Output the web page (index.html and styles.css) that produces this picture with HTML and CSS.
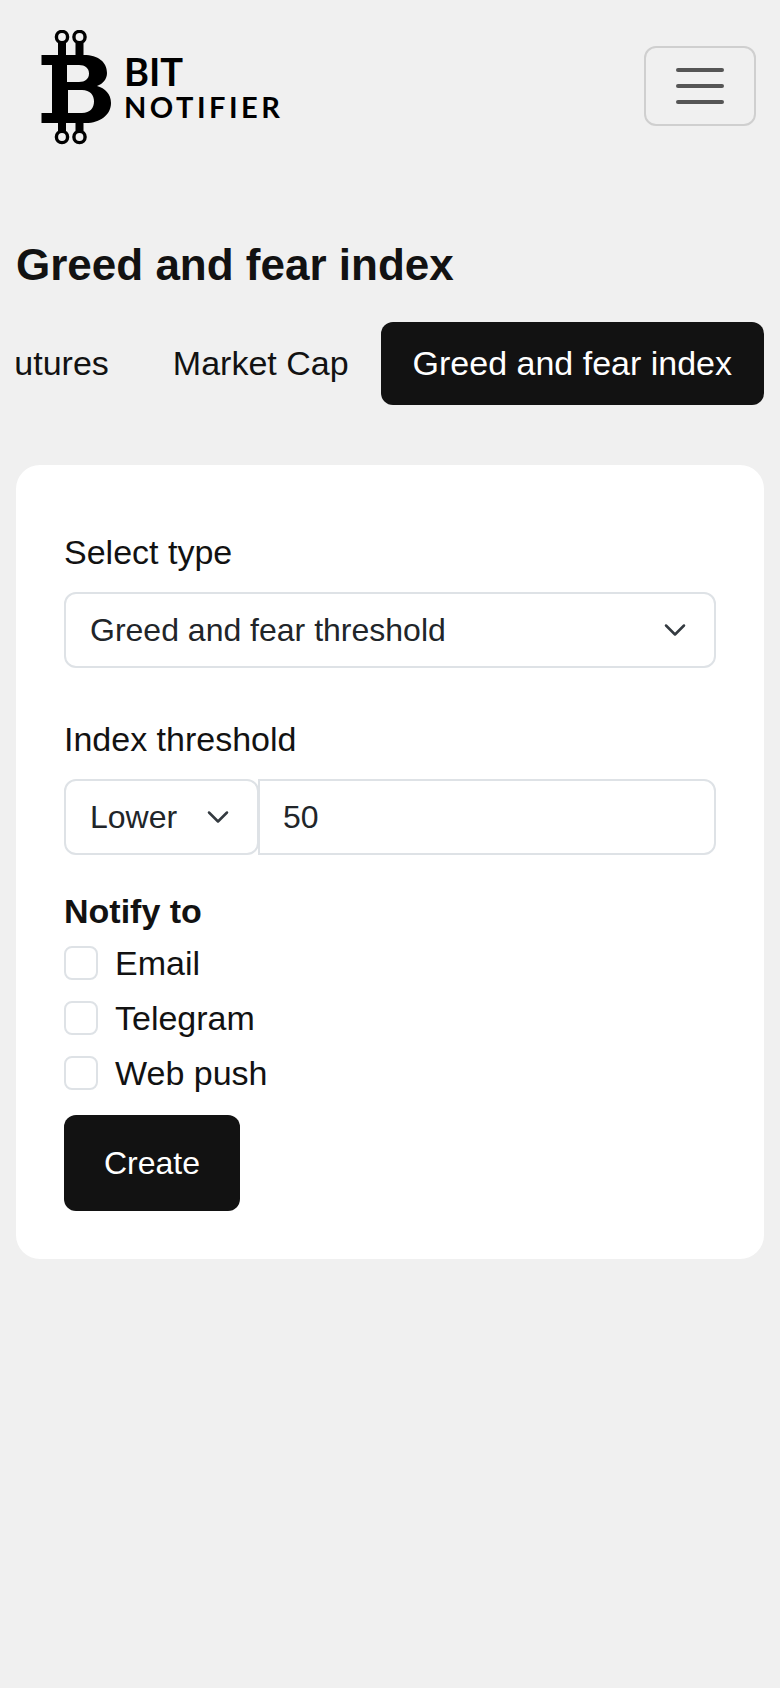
FILE: index.html
```html
<!doctype html>
<html lang="en">
	<head>
		<meta charset="utf-8">
		<meta name="viewport" content="width=device-width, initial-scale=1">
		<title>Greed and fear index</title>

		<link rel="stylesheet" href="styles.css">
	</head>
	<body>
		<header class="navbar">
			<a class="brand" href="#">
				<svg class="brandMark" width="70" height="116" viewBox="41 30 70 116" aria-hidden="true">
					<g fill="none" stroke="#000" stroke-width="3.4">
						<circle cx="62" cy="37" r="5.600"/>
						<circle cx="79.500" cy="37" r="5.600"/>
						<circle cx="62" cy="137" r="5.600"/>
						<circle cx="79.500" cy="137" r="5.600"/>
					</g>
					<path d="M58 43h8v13h-8zM75.500 43h8v13h-8zM58 122h8v9h-8zM75.500 122h8v9h-8z"/>
					<path fill-rule="evenodd" d="M41.500 55H84C98 55 107 62 107 73C107 79 103 84 97 86C105 88 111 94 111 103C111 115 100 123 86 123H41.500V113H52V65H41.500ZM67 65V82H79C85 82 89 79 89 73.500C89 68 85 65 79 65ZM68 90V113H82C90 113 94 108 94 101.500C94 95 90 90 82 90Z"/>
				</svg>
				<span class="brandText">
					<span class="brandTop">BIT</span>
					<span class="brandBottom">NOTIFIER</span>
				</span>
			</a>
			<button class="menuToggle" type="button" aria-label="Menu">
				<span></span>
				<span></span>
				<span></span>
			</button>
		</header>

		<main class="content">
			<h1>Greed and fear index</h1>

			<nav class="tabs">
				<a href="#">Futures</a>
				<a href="#">Market Cap</a>
				<a class="active" href="#">Greed and fear index</a>
			</nav>

			<form class="card">
				<div class="field typeField">
					<label for="alertType">Select type</label>
					<select id="alertType" class="control">
						<option>Greed and fear threshold</option>
					</select>
				</div>

				<div class="field">
					<label for="threshold">Index threshold</label>
					<div class="inputGroup">
						<select class="control direction" aria-label="Direction">
							<option>Lower</option>
						</select>
						<input id="threshold" class="control value" type="text" value="50">
					</div>
				</div>

				<fieldset class="notify">
					<legend>Notify to</legend>
					<label class="check"><input type="checkbox"> Email</label>
					<label class="check"><input type="checkbox"> Telegram</label>
					<label class="check"><input type="checkbox"> Web push</label>
				</fieldset>

				<button class="submit" type="button">Create</button>
			</form>
		</main>
	</body>
</html>
```

FILE: styles.css
```css
body {
	margin: 0;
	min-height: 1688px;
	background: #f0f0f0;
	color: #121212;
	font-family: "Liberation Sans", Arial, sans-serif;
	font-size: 34px;
}

a {
	color: inherit;
	text-decoration: none;
}

.navbar {
	display: flex;
	justify-content: space-between;
	align-items: center;
	padding: 30px 24px 0 41px;
}

.brand {
	display: flex;
	align-items: center;
	gap: 13px;
	color: #000;
	font-family: Lato, sans-serif;
	font-weight: 700;
}

.brandMark {
	display: block;
}

.brandText {
	display: flex;
	flex-direction: column;
	gap: 8px;
	margin-bottom: 2px;
}

.brandTop {
	font-size: 38px;
	line-height: 32px;
}

.brandBottom {
	font-size: 29px;
	line-height: 24px;
	letter-spacing: 3.5px;
}

.menuToggle {
	display: flex;
	flex-direction: column;
	justify-content: center;
	align-items: center;
	gap: 12px;
	box-sizing: border-box;
	width: 112px;
	height: 80px;
	padding: 0;
	margin-top: -4px;
	background: transparent;
	border: 2px solid #cfcfcf;
	border-radius: 12px;
}

.menuToggle span {
	display: block;
	width: 48px;
	height: 4px;
	border-radius: 2px;
	background: #555;
}

.content {
	padding: 0 16px;
}

h1 {
	margin: 92px 0 0;
	font-size: 44px;
	line-height: 54px;
	font-weight: 700;
}

.tabs {
	display: flex;
	justify-content: flex-end;
	overflow: hidden;
	margin-top: 30px;
}

.tabs a {
	flex-shrink: 0;
	padding: 21px 32px;
	line-height: 41px;
	border-radius: 12px;
}

.tabs a.active {
	background: #121212;
	color: #fff;
}

.card {
	margin-top: 60px;
	padding: 63px 48px 48px;
	background: #fff;
	border-radius: 24px;
}

.field {
	margin-bottom: 32px;
}

.typeField {
	margin-bottom: 47px;
}

.field > label {
	display: block;
	margin-bottom: 16px;
	line-height: 48px;
}

.control {
	display: block;
	box-sizing: border-box;
	width: 100%;
	height: 76px;
	padding: 0 24px;
	background-color: #fff;
	border: 2px solid #dee2e6;
	border-radius: 12px;
	color: #212529;
	font: inherit;
	font-size: 32px;
	outline: 0;
}

select.control {
	appearance: none;
	padding-right: 72px;
	background-image: url("data:image/svg+xml,%3csvg xmlns='http://www.w3.org/2000/svg' viewBox='0 0 16 16'%3e%3cpath fill='none' stroke='%23343a40' stroke-linecap='round' stroke-linejoin='round' stroke-width='1.7' d='m2 5 6 6 6-6'/%3e%3c/svg%3e");
	background-repeat: no-repeat;
	background-position: right 27px center;
	background-size: 24px 24px;
}

.inputGroup {
	display: flex;
}

.direction {
	flex: 0 0 195px;
	width: 195px;
}

.value {
	flex: 1;
	min-width: 0;
	margin-left: -1px;
	padding-left: 23px;
	border-radius: 0 12px 12px 0;
}

.notify {
	margin: 0;
	padding: 0;
	border: 0;
}

legend {
	padding: 0;
	font-weight: 700;
	line-height: 48px;
}

.check {
	display: flex;
	align-items: center;
	height: 55px;
	line-height: 48px;
}

.check input {
	appearance: none;
	flex: 0 0 34px;
	box-sizing: border-box;
	width: 34px;
	height: 34px;
	margin: 0 17px 0 0;
	background: #fff;
	border: 2px solid #dee2e6;
	border-radius: 8px;
}

.submit {
	display: block;
	width: 176px;
	height: 96px;
	margin-top: 15px;
	padding: 0;
	background: #121212;
	border: 0;
	border-radius: 12px;
	color: #fff;
	font: inherit;
	font-size: 32px;
}
```
